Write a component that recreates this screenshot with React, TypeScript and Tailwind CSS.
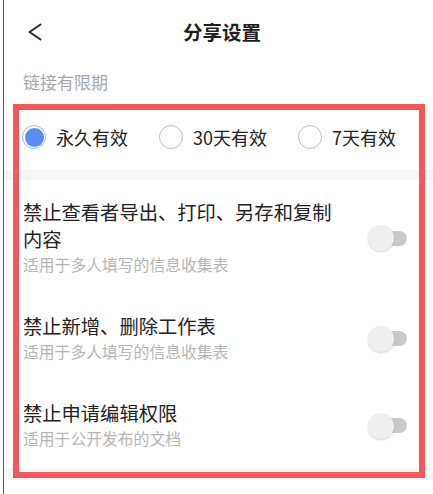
import React from "react";

const font = { fontFamily: '"Noto Sans CJK SC", "Noto Sans", sans-serif' };

function Toggle() {
  return (
    <div className="relative w-[39px] h-[26px] shrink-0">
      <div className="absolute right-0 top-[5.5px] w-[31px] h-[15px] rounded-full bg-[#c9c9c9]" />
      <div className="absolute left-0 top-0 w-[26px] h-[26px] rounded-full bg-[#efefef] shadow-[0_1px_2px_rgba(0,0,0,0.18)]" />
    </div>
  );
}

function Row({ title, sub }: { title: string; sub: string }) {
  return (
    <div className="flex items-center pl-[19px] pr-[26px] pt-[19px] pb-[17px]">
      <div className="flex-1 min-w-0">
        <div className="max-w-[318px] text-[19.3px] leading-[27px] text-[#222]">{title}</div>
        <div className="text-[15.8px] leading-[24px] text-[#b5b5b5]">{sub}</div>
      </div>
      <Toggle />
    </div>
  );
}

function Radio({ checked, label }: { checked?: boolean; label: string }) {
  return (
    <div className="flex items-center gap-[10px]">
      {checked ? (
        <div className="w-[24px] h-[24px] rounded-full border border-[#9dbcf3] flex items-center justify-center">
          <div className="w-[19px] h-[19px] rounded-full bg-[#5a8df1]" />
        </div>
      ) : (
        <div className="w-[24px] h-[24px] rounded-full border border-[#bfbfbf]" />
      )}
      <span className="text-[18px] leading-[24px] text-[#222]">{label}</span>
    </div>
  );
}

export default function App() {
  return (
    <div className="relative w-[433px] h-[494px] overflow-hidden bg-white pl-[3px]" style={font}>
      <div className="h-full border-l border-[#5a5a5a] flex flex-col">
        {/* header */}
        <div className="h-[64px] grid grid-cols-[1fr_auto_1fr] items-center pl-[7px]">
          <div className="pl-[17px] flex items-center">
            <svg width="14" height="18" viewBox="0 0 14 18" fill="none">
              <polyline points="12.5,1.5 1.5,9 12.5,16.5" stroke="#2a2a2a" strokeWidth="2" strokeLinecap="round" strokeLinejoin="round" />
            </svg>
          </div>
          <div className="text-[19.5px] font-semibold text-[#1f1f1f] leading-[28px]">分享设置</div>
          <div />
        </div>
        {/* label */}
        <div className="pl-[19px] pt-[6px] pb-[10px] text-[17px] leading-[24px] text-[#a8a8a8]">链接有限期</div>
        {/* radio section */}
        <div className="h-[66px] flex items-center gap-[31px] pl-[18px]">
          <Radio checked label="永久有效" />
          <Radio label="30天有效" />
          <Radio label="7天有效" />
        </div>
        <div className="h-[10px] bg-[#f6f7f9]" />
        <Row title="禁止查看者导出、打印、另存和复制内容" sub="适用于多人填写的信息收集表" />
        <Row title="禁止新增、删除工作表" sub="适用于多人填写的信息收集表" />
        <Row title="禁止申请编辑权限" sub="适用于公开发布的文档" />
        <div className="h-[12px] bg-[#f6f7f9]" />
        <div className="flex-1 bg-white" />
      </div>
      {/* red annotation box */}
      <div className="pointer-events-none absolute left-[13px] top-[104px] w-[412px] h-[374px] border-[6.5px] border-[#f35757]" />
    </div>
  );
}
